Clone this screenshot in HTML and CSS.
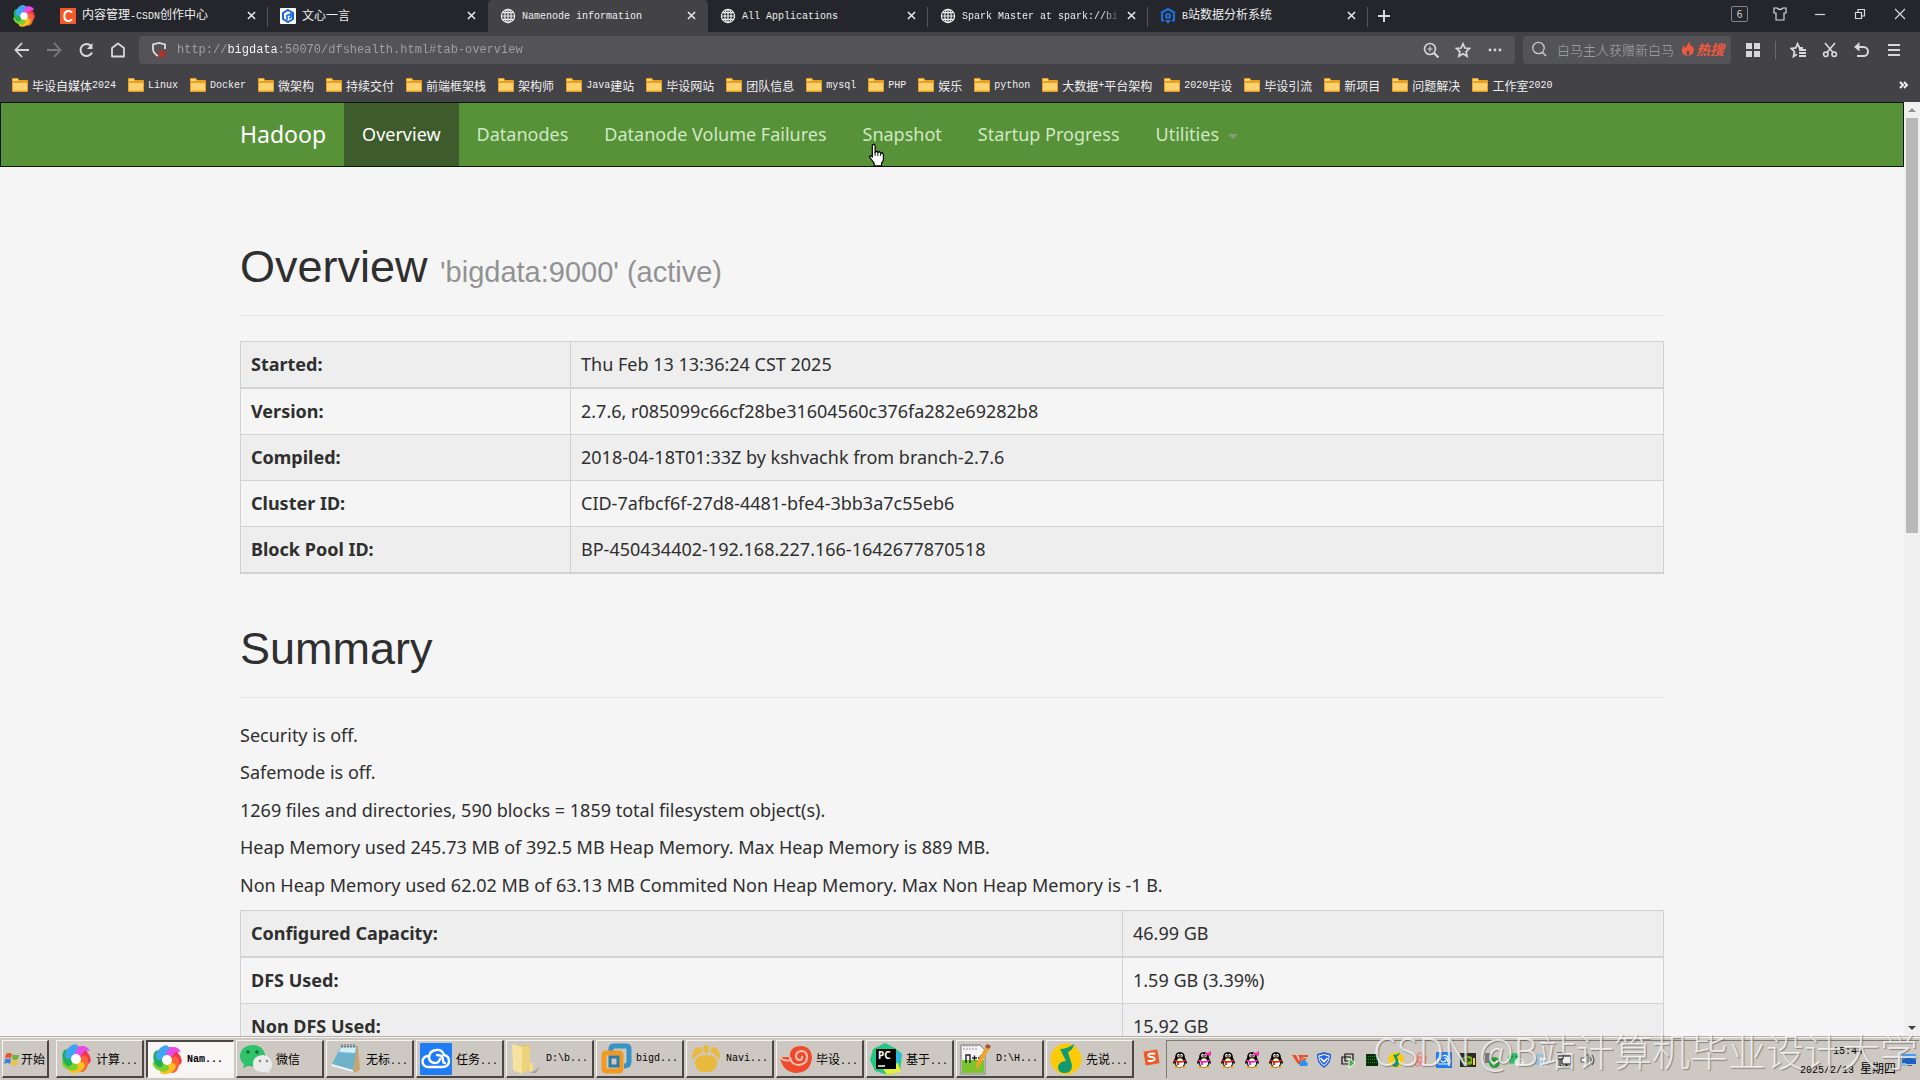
FILE: index.html
```html
<!DOCTYPE html>
<html lang="zh-CN">
<head>
  <meta charset="utf-8">
  <meta name="viewport" content="width=device-width,initial-scale=1">
  <title>Namenode information</title>
  <link rel="stylesheet" href="styles.css">
</head>
<body>

<!-- shared icons -->
<svg class="defs" width="0" height="0" aria-hidden="true">
  <defs>
    <symbol id="i-close" viewBox="0 0 10 10"><path d="M1 1l8 8M9 1L1 9" fill="none" stroke="currentColor" stroke-width="1.6"/></symbol>
    <symbol id="i-globe" viewBox="0 0 16 16"><g fill="none" stroke="currentColor" stroke-width="1.2"><circle cx="8" cy="8" r="6.6"/><ellipse cx="8" cy="8" rx="3.2" ry="6.6"/><path d="M8 1.4v13.2M1.4 8h13.2M2.6 4.6h10.8M2.6 11.4h10.8"/></g></symbol>
    <symbol id="i-folder" viewBox="0 0 16 16"><path d="M0 2q0-1 1-1h5l1 2h8q1 0 1 1v2H0z" fill="#e9a11f"/><path d="M1 2h4.500l1 2H1z" fill="#fbd676"/><path d="M0 5h16v9q0 1-1 1H1q-1 0-1-1z" fill="#e9a11f"/><path d="M1 6h14v7.500H1z" fill="#fbd272"/></symbol>
    <symbol id="i-swirl" viewBox="0 0 32 32">
      <g>
        <ellipse cx="19" cy="8" rx="8.500" ry="5" fill="#e94be6" transform="rotate(0 16 16)"/>
        <ellipse cx="19" cy="8" rx="8.500" ry="5" fill="#f4364a" transform="rotate(52 16 16)"/>
        <ellipse cx="19" cy="8" rx="8.500" ry="5" fill="#f8663a" transform="rotate(103 16 16)"/>
        <ellipse cx="19" cy="8" rx="8.500" ry="5" fill="#fdc01e" transform="rotate(154 16 16)"/>
        <ellipse cx="19" cy="8" rx="8.500" ry="5" fill="#7ccf2e" transform="rotate(206 16 16)"/>
        <ellipse cx="19" cy="8" rx="8.500" ry="5" fill="#1fb05c" transform="rotate(257 16 16)"/>
        <ellipse cx="19" cy="8" rx="8.500" ry="5" fill="#3fa4f4" transform="rotate(309 16 16)"/>
        <path d="M15 10Q17 3 24 3q4 1 6 5-6-2-9 5z" fill="#e94be6"/>
      </g>
      <circle cx="16" cy="16" r="5" fill="#fff"/>
    </symbol>
    <symbol id="i-penguin" viewBox="0 0 16 18">
      <path d="M8 1q5 0 5 6q2 3 2 6l-2-1q0 5-5 5t-5-5l-2 1q0-3 2-6q0-6 5-6z" fill="#080808"/>
      <ellipse cx="8" cy="12" rx="4" ry="4.500" fill="#fff"/>
      <ellipse cx="6.500" cy="4.500" rx="1.300" ry="1.800" fill="#fff"/><ellipse cx="9.500" cy="4.500" rx="1.300" ry="1.800" fill="#fff"/>
      <path d="M6.500 4h1v1.500h-1zM8.700 4h1v1.500h-1z" fill="#000"/>
      <path d="M5 6.700h6L8 8z" fill="#f5a81c"/>
      <path d="M2.500 8.500q5.500 3 11 0v2q-3 1.500-6.500 1.300V14H5v-2.500q-1.500-.3-2.500-1z" fill="currentColor"/>
      <path d="M2 16q3-2 5.500 1H2zM14 16q-3-2-5.500 1H14z" fill="#f5a81c"/>
    </symbol>
    <symbol id="i-penguin-bow" viewBox="0 0 16 18"><use href="#i-penguin"/><path d="M9 1l3 1 3-2v5l-3-1-2 1z" fill="currentColor"/></symbol>
    <symbol id="i-wechat" viewBox="0 0 32 32">
      <path d="M13 2C5 2 0 7 0 13q0 5 4 8l-1 4 5-2q12 2 16-5 2-4 1-7C23 5 19 2 13 2z" fill="#2fc26b"/>
      <path d="M23 12q-10 1-10 9t10 8q2 0 3-.5l4 2-1-3q4-3 3-7-1-8-9-8.500z" fill="#ececec"/>
      <circle cx="8" cy="9" r="1.800" fill="#176b3a"/><circle cx="17" cy="9" r="1.800" fill="#176b3a"/>
      <circle cx="20" cy="18" r="1.300" fill="#888"/><circle cx="27" cy="18" r="1.300" fill="#888"/>
    </symbol>
    <symbol id="i-cloud" viewBox="0 0 32 32">
      <rect width="32" height="32" rx="1" fill="#1f7cf7"/>
      <path d="M8 13a5.500 5.500 0 0 0 0 11h14q7 0 7-6 0-5-5-6Q22 6 16 7q-7 1-7 8 1 5 6 5 4 0 5-4M17 12q6 0 6 5 0 3 2 3" fill="none" stroke="#fff" stroke-width="2.400" stroke-linecap="round"/>
    </symbol>
    <symbol id="i-music" viewBox="0 0 32 32">
      <circle cx="16" cy="16" r="15.500" fill="#fccb05"/>
      <path d="M10 6q7 0 14-5-1 6-6 8l4 13q0 8-7 8t-7-6q1-6 8-6L11 8z" fill="#109a72"/>
    </symbol>
  </defs>
</svg>

<header class="browser">
  <div class="tabbar">
    <svg class="logo"><use href="#i-swirl"/></svg>
    <div class="tabs">
      <div class="tab">
        <svg class="tab-icon" viewBox="0 0 16 16"><rect width="16" height="16" fill="#f4582b"/><path d="M12 4.800Q11 3 8.500 3 4.500 3 4.300 8q0 5 4 5 2.500 0 3.700-1.800" fill="none" stroke="#fff" stroke-width="2"/></svg>
        <span class="tab-title">内容管理<span class="en">-CSDN</span>创作中心</span>
        <button class="tab-close" aria-label="Close"><svg><use href="#i-close"/></svg></button>
      </div>
      <div class="tab">
        <svg class="tab-icon" viewBox="0 0 16 16"><rect width="16" height="16" rx="1" fill="#fff"/><path d="M8 2l5 3v6l-5 3-5-3V5z" fill="none" stroke="#1668dc" stroke-width="2"/><path d="M7 12V7.500L11 6v3L9 10" fill="none" stroke="#1668dc" stroke-width="1.600"/></svg>
        <span class="tab-title">文心一言</span>
        <button class="tab-close" aria-label="Close"><svg><use href="#i-close"/></svg></button>
      </div>
      <div class="tab active">
        <svg class="tab-icon"><use href="#i-globe"/></svg>
        <span class="tab-title"><span class="en">Namenode information</span></span>
        <button class="tab-close" aria-label="Close"><svg><use href="#i-close"/></svg></button>
      </div>
      <div class="tab">
        <svg class="tab-icon"><use href="#i-globe"/></svg>
        <span class="tab-title"><span class="en">All Applications</span></span>
        <button class="tab-close" aria-label="Close"><svg><use href="#i-close"/></svg></button>
      </div>
      <div class="tab">
        <svg class="tab-icon"><use href="#i-globe"/></svg>
        <span class="tab-title fade"><span class="en">Spark Master at spark://bi</span></span>
        <button class="tab-close" aria-label="Close"><svg><use href="#i-close"/></svg></button>
      </div>
      <div class="tab">
        <svg class="tab-icon" viewBox="0 0 16 16"><path d="M4 13l-2-1V4.500L8 1l6 3.500V12l-2 1" fill="none" stroke="#1f6fd8" stroke-width="2.200"/><circle cx="8" cy="8" r="3" fill="#1f6fd8"/><circle cx="8" cy="8" r="1" fill="#24262b"/><path d="M5 12h6l-3 4z" fill="#1f6fd8"/></svg>
        <span class="tab-title"><span class="en">B</span>站数据分析系统</span>
        <button class="tab-close" aria-label="Close"><svg><use href="#i-close"/></svg></button>
      </div>
      <button class="new-tab" aria-label="New tab"><svg viewBox="0 0 12 12"><path d="M6 0v12M0 6h12" stroke="currentColor" stroke-width="2"/></svg></button>
    </div>
    <div class="window-controls">
      <button class="count">6</button>
      <button aria-label="Skin"><svg viewBox="0 0 16 16"><path d="M2 2h3q3 3 6 0h3v5h-2v7H4V7H2z" fill="none" stroke="currentColor" stroke-width="1.200"/></svg></button>
      <button aria-label="Minimize"><svg viewBox="0 0 16 16"><path d="M3 8.500h10" stroke="currentColor" stroke-width="1.200"/></svg></button>
      <button aria-label="Restore"><svg viewBox="0 0 16 16"><path d="M3.500 6.500h6v6h-6zM6 6V3.500h6.500V10H10" fill="none" stroke="currentColor" stroke-width="1.200"/></svg></button>
      <button aria-label="Close window"><svg viewBox="0 0 16 16"><path d="M3 3l10 10M13 3L3 13" stroke="currentColor" stroke-width="1.200"/></svg></button>
    </div>
  </div>

  <div class="toolbar">
    <div class="nav-buttons">
      <button aria-label="Back"><svg viewBox="0 0 16 16"><path d="M8 1L1.500 8 8 15M2 8h13" fill="none" stroke="currentColor" stroke-width="1.800"/></svg></button>
      <button class="dim" aria-label="Forward"><svg viewBox="0 0 16 16"><path d="M8 1l6.500 7L8 15M14 8H1" fill="none" stroke="currentColor" stroke-width="1.800"/></svg></button>
      <button aria-label="Reload"><svg viewBox="0 0 16 16"><path d="M14 10.500A6 6 0 1 1 13 4" fill="none" stroke="currentColor" stroke-width="2"/><path d="M14.500 1v6H9z" fill="currentColor"/></svg></button>
      <button aria-label="Home"><svg viewBox="0 0 16 16"><path d="M2 14.500V6l6-4.500L14 6v8.500z" fill="none" stroke="currentColor" stroke-width="1.800" stroke-linejoin="round"/></svg></button>
    </div>
    <div class="address">
      <svg class="icon" viewBox="0 0 16 16"><path d="M7 14Q2 11 2 7V2.500L8 1l6 1.500V7" fill="none" stroke="#ddd" stroke-width="1.800"/><path d="M8 8.500l6 6.500M14 8.500L8 15" stroke="#c62a1c" stroke-width="2"/></svg>
      <input class="url" type="text" aria-label="Address" value="http://bigdata:50070/dfshealth.html#tab-overview">
      <button aria-label="Zoom"><svg viewBox="0 0 16 16"><circle cx="7" cy="7" r="5.500" fill="none" stroke="currentColor" stroke-width="1.600"/><path d="M11 11l4.500 4.500" stroke="currentColor" stroke-width="2.200"/><path d="M7 4.500v5M4.500 7h5" stroke="currentColor" stroke-width="1.200"/></svg></button>
      <button aria-label="Bookmark"><svg viewBox="0 0 16 16"><path d="M8 1.800l1.900 4.200 4.600.5-3.400 3.100 1 4.600L8 11.800l-4.100 2.400 1-4.600L1.500 6.500 6.100 6z" fill="none" stroke="currentColor" stroke-width="1.700"/></svg></button>
      <button aria-label="More"><svg viewBox="0 0 16 16"><g fill="currentColor"><circle cx="3" cy="8" r="1.400"/><circle cx="8" cy="8" r="1.400"/><circle cx="13" cy="8" r="1.400"/></g></svg></button>
    </div>
    <div class="search">
      <svg class="icon" viewBox="0 0 16 16"><circle cx="7.500" cy="7" r="5.700" fill="none" stroke="#ccc" stroke-width="1.300"/><path d="M11.500 11.500l3.500 3.500" stroke="#ccc" stroke-width="1.600"/></svg>
      <input type="text" aria-label="Search" placeholder="白马主人获赠新白马">
      <svg class="flame" viewBox="0 0 14 16"><path d="M7 15Q0 14 1 8q1-3 2-4 0 2 1 3Q6 5 8 1q1 3 3 5l1-1q3 8-5 10 3-3 0-6-3 3 0 6z" fill="#f0593f"/></svg>
      <span class="hot">热搜</span>
    </div>
    <div class="tools">
      <button aria-label="Apps"><svg viewBox="0 0 16 16"><path d="M1 1h6v6H1zM9 1h6v6H9zM1 9h6v6H1zM9 9h6v6H9z" fill="currentColor"/></svg></button>
      <span class="sep"></span>
      <button aria-label="Favorites"><svg viewBox="0 0 16 16"><path d="M13 6L9.500 6 7.500 1.800 5.700 6l-4.500.5L4.500 9.700l-1 4.800L7 12.300" fill="none" stroke="currentColor" stroke-width="1.800"/><path d="M9 8h7M9 11h7M9 14h7" stroke="currentColor" stroke-width="1.800"/></svg></button>
      <button aria-label="Screenshot"><svg viewBox="0 0 16 16"><g fill="none" stroke="currentColor" stroke-width="1.700"><path d="M3 1l8 9.500M13 1L5 10.500"/><circle cx="3.800" cy="12.300" r="2.200"/><circle cx="12.200" cy="12.300" r="2.200"/></g></svg></button>
      <button aria-label="Undo"><svg viewBox="0 0 16 16"><path d="M2 5h7.500a4.500 4.500 0 0 1 0 9H3" fill="none" stroke="currentColor" stroke-width="2"/><path d="M5.500 0v9.500L0 5z" fill="currentColor"/></svg></button>
      <button aria-label="Menu"><svg viewBox="0 0 16 16"><path d="M2 3h12M2 8h12M2 13h12" stroke="currentColor" stroke-width="2"/></svg></button>
    </div>
  </div>

  <nav class="bookmarks">
    <a href="#"><svg><use href="#i-folder"/></svg>毕设自媒体<span class="en">2024</span></a>
    <a href="#"><svg><use href="#i-folder"/></svg><span class="en">Linux</span></a>
    <a href="#"><svg><use href="#i-folder"/></svg><span class="en">Docker</span></a>
    <a href="#"><svg><use href="#i-folder"/></svg>微架构</a>
    <a href="#"><svg><use href="#i-folder"/></svg>持续交付</a>
    <a href="#"><svg><use href="#i-folder"/></svg>前端框架栈</a>
    <a href="#"><svg><use href="#i-folder"/></svg>架构师</a>
    <a href="#"><svg><use href="#i-folder"/></svg><span class="en">Java</span>建站</a>
    <a href="#"><svg><use href="#i-folder"/></svg>毕设网站</a>
    <a href="#"><svg><use href="#i-folder"/></svg>团队信息</a>
    <a href="#"><svg><use href="#i-folder"/></svg><span class="en">mysql</span></a>
    <a href="#"><svg><use href="#i-folder"/></svg><span class="en">PHP</span></a>
    <a href="#"><svg><use href="#i-folder"/></svg>娱乐</a>
    <a href="#"><svg><use href="#i-folder"/></svg><span class="en">python</span></a>
    <a href="#"><svg><use href="#i-folder"/></svg>大数据<span class="en">+</span>平台架构</a>
    <a href="#"><svg><use href="#i-folder"/></svg><span class="en">2020</span>毕设</a>
    <a href="#"><svg><use href="#i-folder"/></svg>毕设引流</a>
    <a href="#"><svg><use href="#i-folder"/></svg>新项目</a>
    <a href="#"><svg><use href="#i-folder"/></svg>问题解决</a>
    <a href="#"><svg><use href="#i-folder"/></svg>工作室<span class="en">2020</span></a>
    <button class="overflow" aria-label="More bookmarks"><svg viewBox="0 0 12 12"><path d="M2 3l3 3-3 3M6 3l3 3-3 3" fill="none" stroke="currentColor" stroke-width="2"/></svg></button>
  </nav>
</header>

<div class="viewport">
  <div class="page">
    <nav class="navbar">
      <div class="container navbar-inner">
        <a class="brand" href="#">Hadoop</a>
        <a class="active" href="#tab-overview">Overview</a>
        <a href="#tab-datanode">Datanodes</a>
        <a href="#tab-datanode-volume-failures">Datanode Volume Failures</a>
        <a class="hovered" href="#tab-snapshot">Snapshot<svg class="cursor" viewBox="0 0 18 26"><path d="M5 15V2.500q1.500-2 3 0V10l2-1 1 1 2-.5 1 1.500 2-.2 1 2v6l-2 3v3H7v-3l-5-6.500q0-2.500 3-.3z" fill="#fff" stroke="#000" stroke-width="1.300"/><path d="M8 10v4M11 10v4M14 11v3" stroke="#000"/></svg></a>
        <a href="#tab-startup-progress">Startup Progress</a>
        <a href="#">Utilities<span class="caret"></span></a>
      </div>
    </nav>

    <main class="container">
      <div class="page-header">
        <h1>Overview <small>'bigdata:9000' (active)</small></h1>
      </div>
      <table class="overview">
        <tbody>
          <tr><th scope="row">Started:</th><td>Thu Feb 13 13:36:24 CST 2025</td></tr>
          <tr><th scope="row">Version:</th><td>2.7.6, r085099c66cf28be31604560c376fa282e69282b8</td></tr>
          <tr><th scope="row">Compiled:</th><td>2018-04-18T01:33Z by kshvachk from branch-2.7.6</td></tr>
          <tr><th scope="row">Cluster ID:</th><td>CID-7afbcf6f-27d8-4481-bfe4-3bb3a7c55eb6</td></tr>
          <tr><th scope="row">Block Pool ID:</th><td>BP-450434402-192.168.227.166-1642677870518</td></tr>
        </tbody>
      </table>

      <div class="page-header">
        <h1>Summary</h1>
      </div>
      <p>Security is off.</p>
      <p>Safemode is off.</p>
      <p>1269 files and directories, 590 blocks = 1859 total filesystem object(s).</p>
      <p>Heap Memory used 245.73 MB of 392.5 MB Heap Memory. Max Heap Memory is 889 MB.</p>
      <p>Non Heap Memory used 62.02 MB of 63.13 MB Commited Non Heap Memory. Max Non Heap Memory is -1 B.</p>
      <table class="capacity">
        <tbody>
          <tr><th scope="row">Configured Capacity:</th><td>46.99 GB</td></tr>
          <tr><th scope="row">DFS Used:</th><td>1.59 GB (3.39%)</td></tr>
          <tr><th scope="row">Non DFS Used:</th><td>15.92 GB</td></tr>
        </tbody>
      </table>
    </main>
  </div>
  <div class="scrollbar">
    <span class="arrow up"></span>
    <div class="track"><div class="thumb"></div></div>
    <span class="arrow down"></span>
  </div>
</div>

<footer class="taskbar">
  <button class="start">
    <svg viewBox="0 0 16 16"><path d="M2 3q3-2 6 0L7 7.500q-3-2-6 0z" fill="#e8572a"/><path d="M9 3.300q3 2 6 0L14 8q-3 2-6 0z" fill="#6db33a"/><path d="M1 8.500q3-2 6 0L6 13q-3-2-6 0z" fill="#3b84d8"/><path d="M8 9q3 2 6 0l-1 4.500q-3 2-6 0z" fill="#f5c02c"/></svg>开始
  </button>
  <div class="tasks">
    <button><svg><use href="#i-swirl"/></svg><span>计算<span class="en">...</span></span></button>
    <button class="active"><svg><use href="#i-swirl"/></svg><span class="en">Nam...</span></button>
    <button><svg><use href="#i-wechat"/></svg>微信</button>
    <button><svg viewBox="0 0 32 32"><path d="M11 3h17l2 24-6 3z" fill="#c9a56a"/><path d="M11 3h16l-4 26L1 23z" fill="#6fb2cb"/><path d="M11 4h15l-1 6L9 9z" fill="#d5edf5"/><path d="M1 23l22 6v-2L2 21z" fill="#f4f4f4"/><path d="M12 1v4M15 1v4M18 1v4M21 1v4M24 1v4" stroke="#666"/></svg><span>无标<span class="en">...</span></span></button>
    <button><svg><use href="#i-cloud"/></svg><span>任务<span class="en">...</span></span></button>
    <button><svg viewBox="0 0 32 32"><path d="M20 30l10-6-4 6z" fill="#aaa49d"/><path d="M8 2h12v26H8z" fill="#e4c869"/><path d="M2 1l10 3v27L3 27z" fill="#f6e3a0"/><path d="M12 4l8-1v22l-8 6z" fill="#ecd27a"/><path d="M20 20h3v8h-4z" fill="#f4dc8c"/></svg><span class="en">D:\b...</span></button>
    <button><svg viewBox="0 0 32 32"><path d="M11 8V6q0-3 3-3h12q3 0 3 3v13q0 4-5 4" fill="none" stroke="#3593c5" stroke-width="5"/><rect x="4" y="10" width="17" height="18" rx="2" fill="none" stroke="#f29a1f" stroke-width="5"/><path d="M10 14h8v9h-8z" fill="none" stroke="#2d7da8" stroke-width="3"/></svg><span class="en">bigd...</span></button>
    <button><svg viewBox="0 0 32 32"><g fill="#e9b93c"><path d="M5 20q0-8 11-8t11 8q-1 9-9 9h-4q-8 0-9-9z"/><path d="M2 15q0-11 8-11 3 3 2 6-6 1-8 6zM30 15q0-11-8-11-2 3-1 6 5 1 7 6z"/><ellipse cx="16" cy="6" rx="3" ry="4"/></g></svg><span class="en">Navi...</span></button>
    <button><svg viewBox="0 0 32 32"><path d="M0 14h10Q9 4 20 3q11 0 12 11-1 16-17 16Q2 28 0 14z" fill="#ee4a2b"/><path d="M10 14q1 8 9 8 8-1 8-8 0-6-6-6-5 1-5 5t4 4q3-1 2-4M0 14q4 5 10 3" fill="none" stroke="#f9c3b2" stroke-width="2"/></svg><span>毕设<span class="en">...</span></span></button>
    <button><svg viewBox="0 0 32 32"><path d="M3 6l12-6 10 5 7 6-2 18-12 3-13-4L0 17z" fill="#22c985"/><path d="M22 8l10 3-4 10z" fill="#29b9f0"/><path d="M12 24l16-4 3 9-14 3z" fill="#e5f03c"/><rect x="6" y="6" width="20" height="20" fill="#000"/><path d="M8 23h7" stroke="#fff" stroke-width="1.500"/><text x="8" y="16" class="pc">PC</text></svg><span>基于<span class="en">...</span></span></button>
    <button><svg viewBox="0 0 32 32"><path d="M1 2h19l5 5v24H1z" fill="#f4f4f4" stroke="#777"/><path d="M2 17h22v13H2z" fill="#7bc52c"/><path d="M3 3h15M3 6h15" stroke="#999" stroke-dasharray="2 1"/><path d="M6 20v-8h4v8M12 15h5M14.500 12.500v5M18 15h5M20.500 12.500v5" fill="none" stroke="#222" stroke-width="1.400"/><path d="M27 1l4 2-12 21-4 2 1-5z" fill="#f0a32c"/><path d="M27 1l4 2-2 3-4-2z" fill="#a0503c"/></svg><span class="en">D:\H...</span></button>
    <button><svg><use href="#i-music"/></svg><span>先说<span class="en">...</span></span></button>
  </div>
  <svg class="ime" viewBox="0 0 16 16"><path d="M1 3l12-2 2 12-12 2z" fill="#ee5a24" stroke="#ee5a24" stroke-linejoin="round"/><path d="M11.500 4.500q-6-1-6.500 1.300 0 1.400 3 1.700 3.500.5 3 2.300-1 2.200-6.500 1.200" fill="none" stroke="#fff" stroke-width="1.800"/></svg>
  <div class="tray">
    <div class="tray-icons">
      <svg class="red"><use href="#i-penguin"/></svg>
      <svg class="pink"><use href="#i-penguin-bow"/></svg>
      <svg class="red"><use href="#i-penguin"/></svg>
      <svg class="pink"><use href="#i-penguin-bow"/></svg>
      <svg class="red"><use href="#i-penguin"/></svg>
      <svg viewBox="0 0 16 16"><path d="M0 3h4l3 6 1-2-2-4h10v2h-5l-3 7H6z" fill="#e8502d"/><path d="M9 6h6l-1 2h-5z" fill="#f0723f"/><path d="M8 14q-2-3 1-4 1-3 4-2 1 1 1 2 3 1 1 4z" fill="#2b90ef"/></svg>
      <svg viewBox="0 0 16 16"><path d="M8 0l7 2q1 9-7 14Q0 11 1 2z" fill="#2a62d9"/><path d="M8 2l5.500 1.500Q14 10 8 14 2 10 2.500 3.500z" fill="#fff"/><path d="M8 3l4.500 1.500Q13 9.500 8 13 3 9.500 3.500 4.500z" fill="#2a62d9"/><path d="M4.500 6L8 9.500 11.500 6" fill="none" stroke="#fff" stroke-width="1.600"/></svg>
      <svg viewBox="0 0 16 16"><path d="M5 2h8v7H5zM2 5h8v7H2z" fill="none" stroke="#111" stroke-width="1.200"/><path d="M9 6l6 5-6 5z" fill="#4cb04a" stroke="#fff"/></svg>
      <svg viewBox="0 0 16 16"><path d="M2 2h12v12H2z" fill="#062b06"/><path d="M2 4.500h12M2 7.500h12M2 10.500h12" stroke="#1d8a1d" stroke-dasharray="1 1"/></svg>
      <svg><use href="#i-music"/></svg>
      <svg viewBox="0 0 16 16"><g fill="none" stroke="#e98e86" stroke-width="1.300"><circle cx="8" cy="8" r="3"/><circle cx="8" cy="3.500" r="2.500"/><circle cx="12" cy="6.500" r="2.500"/><circle cx="10.500" cy="11.500" r="2.500"/><circle cx="5.500" cy="11.500" r="2.500"/><circle cx="4" cy="6.500" r="2.500"/></g></svg>
      <svg><use href="#i-cloud"/></svg>
      <svg viewBox="0 0 16 16"><path d="M0 1h16v14H0z" fill="#2a2c26"/><path d="M1 8q4-6 11-3v7q-7 3-11-4z" fill="#79b51c"/><path d="M3 8q4-3 7 0-4 3-7 0z" fill="none" stroke="#23301a" stroke-width="1.400"/><path d="M13 6h2v7h-2z" fill="#ffd92e"/></svg>
      <svg viewBox="0 0 16 16"><path d="M1 1h6v10H1z" fill="#77797c"/><circle cx="10.500" cy="10.500" r="5.500" fill="#2b9a3b"/><path d="M8 10.500l2 2 3.500-4" fill="none" stroke="#fff" stroke-width="1.800"/></svg>
      <svg><use href="#i-wechat"/></svg>
      <svg viewBox="0 0 16 16"><path d="M3 2h10v3H3zM1 7h9v6H1z" fill="#9cc4de"/><path d="M8 6h7v9H8z" fill="#dfeaf2"/><path d="M10 8v5M13 8v5" stroke="#78a5c4"/></svg>
      <svg viewBox="0 0 16 16"><path d="M6 4h9v8H6z" fill="#eee" stroke="#111"/><path d="M6 14.500h9M10.500 12v2" stroke="#111" stroke-width="1.500"/><path d="M1 1h6v6H1z" fill="#eee" stroke="#111"/><path d="M4 7v7h2M3 3v2M5 3v2" fill="none" stroke="#111"/></svg>
      <svg viewBox="0 0 16 16"><path d="M1 6h3l4-4v12l-4-4H1z" fill="#f5f5f5" stroke="#555"/><path d="M10 5q2 3 0 6M12 3q4 5 0 10" fill="none" stroke="#555" stroke-width="1.200"/></svg>
    </div>
    <div class="clock">
      <time class="en">15:44</time>
      <span><span class="en">2025/2/13 </span>星期四</span>
    </div>
    <svg class="desktop" viewBox="0 0 16 16"><path d="M1 2h14v10H1z" fill="#1c62c6"/><path d="M15 2v6Q8 3 1 8V2z" fill="#4a9bf0"/><path d="M0 11h5v3H0z" fill="#8fb9e0"/><path d="M6 13h5v1H6z" fill="#5a6672"/></svg>
  </div>
  <div class="watermark">CSDN @B站计算机毕业设计大学</div>
</footer>

</body>
</html>
```
FILE: styles.css
```css
* {
  box-sizing: border-box;
}

body {
  margin: 0;
  height: 100vh;
  display: flex;
  flex-direction: column;
  overflow: hidden;
  font-family: "Noto Sans", "Noto Sans CJK SC", sans-serif;
  font-size: 12px;
  background: #f5f5f5;
}

button, input {
  border: 0;
  padding: 0;
  margin: 0;
  background: none;
  color: inherit;
  font: inherit;
}

a {
  color: inherit;
  text-decoration: none;
}

svg {
  display: block;
  flex: none;
}

.defs {
  position: absolute;
}

.en {
  font-family: "Liberation Mono", monospace;
  font-size: 10px;
  white-space: pre;
}

/* browser frame */
.browser {
  flex: none;
  height: 102px;
  background: #434246;
  color: #d8d8da;
  font-family: "Noto Sans CJK SC", sans-serif;
}

.tabbar {
  display: flex;
  height: 32px;
  background: #24262b;
}

.logo {
  width: 24px;
  height: 28px;
  margin: 2px 12px;
}

.tabs {
  display: flex;
  flex: 1;
}

.tab {
  display: flex;
  align-items: center;
  width: 220px;
  padding: 0 12px 1px 12px;
  color: #eee;
  position: relative;
}

.tab::after {
  content: "";
  position: absolute;
  right: 0;
  top: 7px;
  width: 1px;
  height: 20px;
  background: #55565b;
}

.tab.active {
  background: #434246;
  border-radius: 4px 4px 0 0;
}

.tab.active::after,
.tab:has(+ .active)::after {
  display: none;
}

.tab-icon {
  width: 16px;
  height: 16px;
  margin-right: 6px;
}

.tab-title {
  flex: 1;
  line-height: 18px;
  padding-bottom: 1px;
  overflow: hidden;
  white-space: nowrap;
}

.tab-title.fade {
  mask-image: linear-gradient(to right, #000 88%, transparent);
}

.tab-close {
  margin-left: 6px;
}

.tab-close svg {
  width: 9px;
  height: 9px;
}

.new-tab {
  padding: 0 10px;
}

.new-tab svg {
  width: 12px;
  height: 12px;
}

.window-controls {
  display: flex;
  align-items: center;
  gap: 24px;
  height: 28px;
  padding-right: 12px;
}

.window-controls svg {
  width: 16px;
  height: 16px;
}

.count {
  width: 17px;
  height: 16px;
  border: 1px solid #86868a;
  border-radius: 2px;
  font-size: 10px;
  line-height: 14px;
}

.toolbar {
  display: flex;
  align-items: center;
  height: 36px;
  padding: 4px 18px 4px 14px;
}

.toolbar svg {
  width: 16px;
  height: 16px;
}

.nav-buttons {
  display: flex;
  gap: 16px;
  margin-right: 13px;
}

.dim {
  color: #7c7c80;
}

.address,
.search {
  display: flex;
  align-items: center;
  height: 28px;
  background: #545358;
  border-radius: 4px;
}

.address {
  flex: 1;
  gap: 16px;
  padding: 0 12px;
}

.url {
  flex: 1;
  margin-left: -6px;
  font-family: "Liberation Mono", monospace;
  font-size: 12px;
  /* host part is brighter than the rest of the url */
  color: transparent;
  background: linear-gradient(to right, #a2a2a5 0 50px, #fff 50px 101px, #a2a2a5 101px);
  -webkit-background-clip: text;
  background-clip: text;
}

.search {
  width: 208px;
  margin-left: 8px;
  padding: 0 6px 2px 8px;
}

.search input {
  width: 120px;
  margin: 0 3px 0 10px;
  font-size: 13px;
  font-weight: 300;
}

.search input::placeholder {
  color: #a8a8ab;
}

.hot {
  color: #f0593f;
  font-size: 14px;
  font-weight: bold;
  font-style: italic;
  white-space: nowrap;
}

.tools {
  display: flex;
  align-items: center;
  gap: 16px;
  margin-left: 14px;
}

.sep {
  width: 1px;
  height: 18px;
  margin: 0 -2px;
  background: #68686c;
}

.bookmarks {
  display: flex;
  align-items: center;
  gap: 12px;
  height: 34px;
  padding: 0 10px 0 12px;
  color: #f0f0f0;
}

.bookmarks a {
  display: flex;
  align-items: center;
  white-space: nowrap;
}

.bookmarks a svg {
  width: 16px;
  height: 16px;
  margin-right: 4px;
}

.overflow {
  margin-left: auto;
}

.overflow svg {
  width: 12px;
  height: 12px;
}

/* hadoop page */
.viewport {
  flex: 1;
  min-height: 0;
  display: flex;
}

.page {
  flex: 1;
  overflow: hidden;
  background: #f5f5f5;
  color: #2f2f2f;
  font-size: 18px;
  line-height: 25px;
}

.container {
  max-width: 1424px;
  margin: 0 auto;
}

.navbar {
  height: 65px;
  background: #579239;
  border: 1px solid #0c1608;
  color: #d0e8c4;
}

.navbar-inner {
  display: flex;
  height: 100%;
}

.navbar a {
  padding: 19px 18px;
  white-space: nowrap;
}

.navbar .brand {
  padding-left: 0;
  font-size: 23px;
  color: #fff;
}

.navbar .active {
  background: #3d5b2b;
  color: #fff;
}

.hovered {
  position: relative;
}

.cursor {
  position: absolute;
  left: 22px;
  top: 40px;
  width: 18px;
  height: 24px;
}

.caret {
  display: inline-block;
  margin-left: 9px;
  vertical-align: middle;
  border: 5px solid transparent;
  border-top-color: #8a9a80;
  border-bottom: 0;
}

.page-header {
  margin: 75px 0 25px;
  padding-bottom: 23px;
  border-bottom: 1px solid #e4e4e4;
}

h1 {
  margin: 0;
  font-family: "Liberation Sans", Arial, sans-serif;
  font-size: 45px;
  font-weight: normal;
  line-height: 50px;
}

h1 small {
  font-size: 29px;
  line-height: 1;
  color: #929292;
}

table {
  width: 100%;
  table-layout: fixed;
  border-collapse: collapse;
}

th, td {
  height: 46px;
  padding: 10px;
  border: 1px solid #d2d2d2;
  text-align: left;
  line-height: 25px;
}

tr:nth-child(odd) {
  background: #eee;
}

tr:first-child > *,
tr:last-child > * {
  border-bottom-width: 2px;
}

.overview th {
  width: 330px;
}

.overview + .page-header {
  margin-top: 50px;
}

.capacity th {
  width: 882px;
}

p {
  margin: 0 0 12px;
}

p:nth-of-type(even) {
  margin-bottom: 13px;
}

.scrollbar {
  display: flex;
  flex-direction: column;
  width: 16px;
  background: #f0f0f0;
}

.track {
  flex: 1;
  padding: 0 2px;
}

.thumb {
  height: 46%;
  background: #b8b8b8;
}

.arrow {
  height: 16px;
  padding: 6px 4px;
}

.arrow::before {
  content: "";
  display: block;
  border: 4px solid transparent;
}

.up::before {
  border-top: 0;
  border-bottom-color: #909090;
}

.down::before {
  border-bottom: 0;
  border-top-color: #404040;
}

/* desktop taskbar */
.taskbar {
  flex: none;
  display: flex;
  position: relative;
  height: 44px;
  padding: 2px 1px 2px 2px;
  border-top: 1px solid #b4b0aa;
  box-shadow: inset 0 1px #f4f2ef;
  background: #cdc8c1;
  color: #000;
  font-family: "Noto Sans CJK SC", sans-serif;
}

.taskbar button {
  display: flex;
  align-items: center;
  height: 38px;
  margin-top: 1px;
  border: 1px solid #f6f4f1;
  border-right: 2px solid #4a4845;
  border-bottom: 2px solid #4a4845;
  white-space: nowrap;
  overflow: hidden;
}

.start {
  width: 47px;
  padding-left: 1px;
}

.start svg {
  width: 16px;
  height: 16px;
  margin-right: 1px;
}

.tasks {
  display: flex;
  gap: 2px;
  margin-left: 7px;
}

.tasks button {
  width: 88px;
  padding-left: 3px;
}

.tasks svg {
  width: 32px;
  height: 32px;
  margin-right: 4px;
}

.tasks .active {
  background: #f7f6f5;
  border: 2px solid #4a4845;
  border-right: 1px solid #f6f4f1;
  border-bottom: 1px solid #f6f4f1;
  font-weight: bold;
}

.pc {
  font-family: "Noto Sans", sans-serif;
  font-size: 10px;
  font-weight: bold;
  fill: #fff;
}

.ime {
  width: 17px;
  height: 17px;
  margin: 10px 4px 0 9px;
}

.tray {
  flex: 1;
  display: flex;
  align-items: center;
  margin: 1px 0 0 2px;
  padding-left: 5px;
  border-top: 1px solid #7d7a76;
  border-left: 1px solid #7d7a76;
}

.tray-icons {
  display: flex;
  gap: 8px;
}

.tray-icons svg {
  width: 16px;
  height: 18px;
}

.red {
  color: #e02a1c;
}

.pink {
  color: #f42cb0;
}

.clock {
  display: flex;
  flex-direction: column;
  align-items: center;
  margin-left: auto;
  padding-top: 3px;
  line-height: 16px;
}

.desktop {
  width: 16px;
  height: 16px;
  margin: 0 2px 0 5px;
}

.watermark {
  position: absolute;
  right: 2px;
  bottom: 6px;
  font-size: 38px;
  font-weight: 300;
  line-height: 48px;
  white-space: nowrap;
  color: rgba(255, 255, 255, 0.75);
  text-shadow: 1px 1px 1px rgba(90, 90, 90, 0.6);
  pointer-events: none;
}
```
